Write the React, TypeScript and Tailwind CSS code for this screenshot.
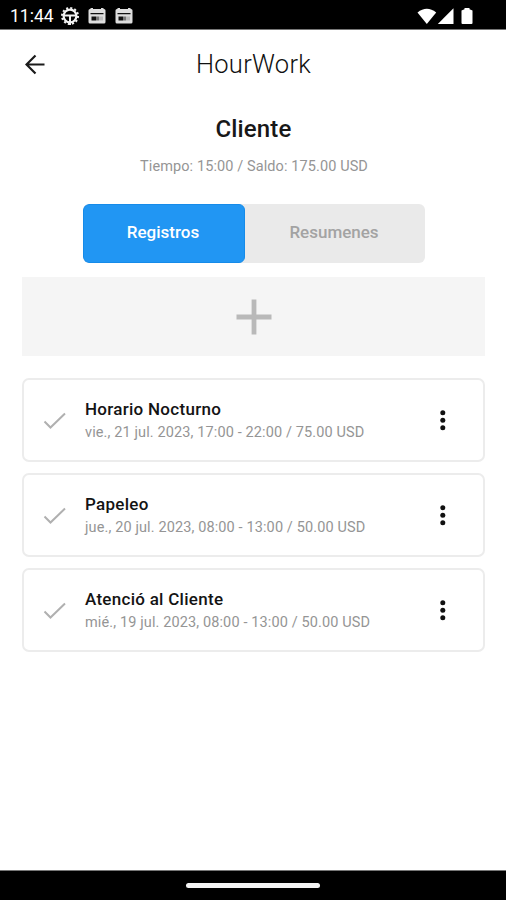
import React from 'react'

interface Entry {
  id: number
  title: string
  detail: string
}

const entries: Entry[] = [
  { id: 1, title: 'Horario Nocturno', detail: 'vie., 21 jul. 2023, 17:00 - 22:00 / 75.00 USD' },
  { id: 2, title: 'Papeleo', detail: 'jue., 20 jul. 2023, 08:00 - 13:00 / 50.00 USD' },
  { id: 3, title: 'Atenció al Cliente', detail: 'mié., 19 jul. 2023, 08:00 - 13:00 / 50.00 USD' },
]

const GearIcon = () => (
  <svg width="20" height="20" viewBox="0 0 20 20" fill="none" stroke="#f2f2f2">
    <circle cx="10" cy="10" r="8" strokeWidth="2" strokeDasharray="2.1 2.09" />
    <circle cx="10" cy="10" r="6.4" strokeWidth="2.2" />
    <path d="M4 9.500h12M10 10v9" strokeWidth="2" />
  </svg>
)

const CalendarIcon = () => (
  <svg width="18" height="16" viewBox="0 0 18 16">
    <path d="M2.500 0h2.500v1h8V0h2.500v1h.5a1.500 1.500 0 0 1 1.500 1.500V14a1.500 1.500 0 0 1-1.500 1.500H2A1.500 1.500 0 0 1 .5 14V2.500A1.500 1.500 0 0 1 2 1h.5z" fill="#dedede" />
    <path d="M2.500 5h13v1.300h-13zM3.500 8.500H8v4H3.500z" fill="#111" />
    <path d="M8 8.500h3v4H8z" fill="#777" />
    <path d="M11 8.500h4v4h-4z" fill="#bbb" />
  </svg>
)

const StatusBar = () => (
  <div className="flex h-[30px] shrink-0 items-center border-b border-[#777] bg-black pl-[10px] text-white">
    <span className="w-[50px] pt-[3px] text-[17.500px] leading-5">11:44</span>
    <div className="flex pt-[2px]">
      <GearIcon />
    </div>
    <div className="ml-2 flex gap-[9px] pt-[2px]">
      <CalendarIcon />
      <CalendarIcon />
    </div>
    <svg className="mt-[2px] ml-auto mr-[32px]" width="57" height="18" viewBox="0 0 57 18" fill="#fff">
      <path d="M.5 5.500Q9.800-2 19.200 5.500L9.800 17z" />
      <path d="M36.500 1.200V17H20.800z" />
      <path d="M47.500 1h5v1.300l3 1.200V16q0 1-1 1h-9q-1 0-1-1V3.500l3-1.200z" />
    </svg>
  </div>
)

const EntryCard: React.FC<{ entry: Entry }> = ({ entry }) => (
  <div className="flex h-[84px] items-center rounded-[7px] border-2 border-[#ececec] bg-white pl-[19px] pr-[28px]">
    <svg className="shrink-0" width="24" height="20" viewBox="0 0 24 20" fill="none" stroke="#b0b0b0" strokeWidth="2">
      <path d="M1.500 11.500l6 6L22 3.500" />
    </svg>
    <div className="ml-[18px] min-w-0 flex-1 pt-px whitespace-nowrap">
      <p className="text-[17px] leading-[23px] font-medium tracking-[0.28px] text-[#141414]">{entry.title}</p>
      <p className="text-[14.500px] leading-[23px] tracking-[0.12px] text-[#959595]">{entry.detail}</p>
    </div>
    <svg className="shrink-0" width="24" height="24" viewBox="0 0 24 24" fill="#111">
      <circle cx="11.800" cy="4.800" r="2.500" />
      <circle cx="11.800" cy="12.300" r="2.500" />
      <circle cx="11.800" cy="19.800" r="2.500" />
    </svg>
  </div>
)

export default function App() {
  return (
    <div className="flex h-[900px] w-[506px] flex-col overflow-hidden bg-white font-['Roboto',sans-serif]">
      <StatusBar />

      {/* App bar */}
      <header className="grid h-[68px] grid-cols-[1fr_auto_1fr] items-center">
        <svg className="ml-[25px]" width="21" height="21" viewBox="0 0 21 21" fill="none" stroke="#1a1a1a" strokeWidth="2.200">
          <path d="M19.500 10.500H2M10.500 1.500l-9 9 9 9" />
        </svg>
        <h1 className="pb-px pl-px text-[25.500px] leading-[30px] font-light tracking-[0.3px] text-[#101010]">HourWork</h1>
      </header>

      <section className="flex flex-col items-center pt-[16px]">
        <h2 className="pl-px text-[24px] leading-[30px] font-medium tracking-[0.15px] text-[#181818]">Cliente</h2>
        <p className="mt-[13px] pl-[2px] text-[14.500px] leading-[20px] tracking-[0.1px] text-[#959595]">
          Tiempo: 15:00 / Saldo: 175.00 USD
        </p>
      </section>

      {/* Tabs */}
      <div className="ml-[82.500px] mt-[27px] flex h-[58.500px] w-[342px] overflow-hidden rounded-[6px] bg-[#eaeaea] text-[17px] font-medium">
        <button className="w-[162px] rounded-[6px] border border-[#168be9] bg-[#2196f3] pr-px pb-[2px] text-white">
          Registros
        </button>
        <button className="flex-1 pr-px pb-[2px] text-[#a3a3a3]">Resumenes</button>
      </div>

      <main className="mr-[21px] ml-[22px] mt-[14.500px] flex-1">
        <button className="flex h-[79px] w-full items-center justify-center bg-[#f5f5f5]">
          <svg width="36" height="36" viewBox="0 0 36 36" stroke="#b9b9b9" strokeWidth="4.800">
            <path d="M18 .5v35M.5 18h35" />
          </svg>
        </button>
        <div className="mt-[22px] flex flex-col gap-[11px]">
          {entries.map((entry) => (
            <EntryCard key={entry.id} entry={entry} />
          ))}
        </div>
      </main>

      {/* Gesture bar */}
      <footer className="flex h-[30px] shrink-0 items-center justify-center border-t border-[#777] bg-black">
        <div className="h-[5px] w-[134px] rounded-full bg-[#f4f4f4]" />
      </footer>
    </div>
  )
}
